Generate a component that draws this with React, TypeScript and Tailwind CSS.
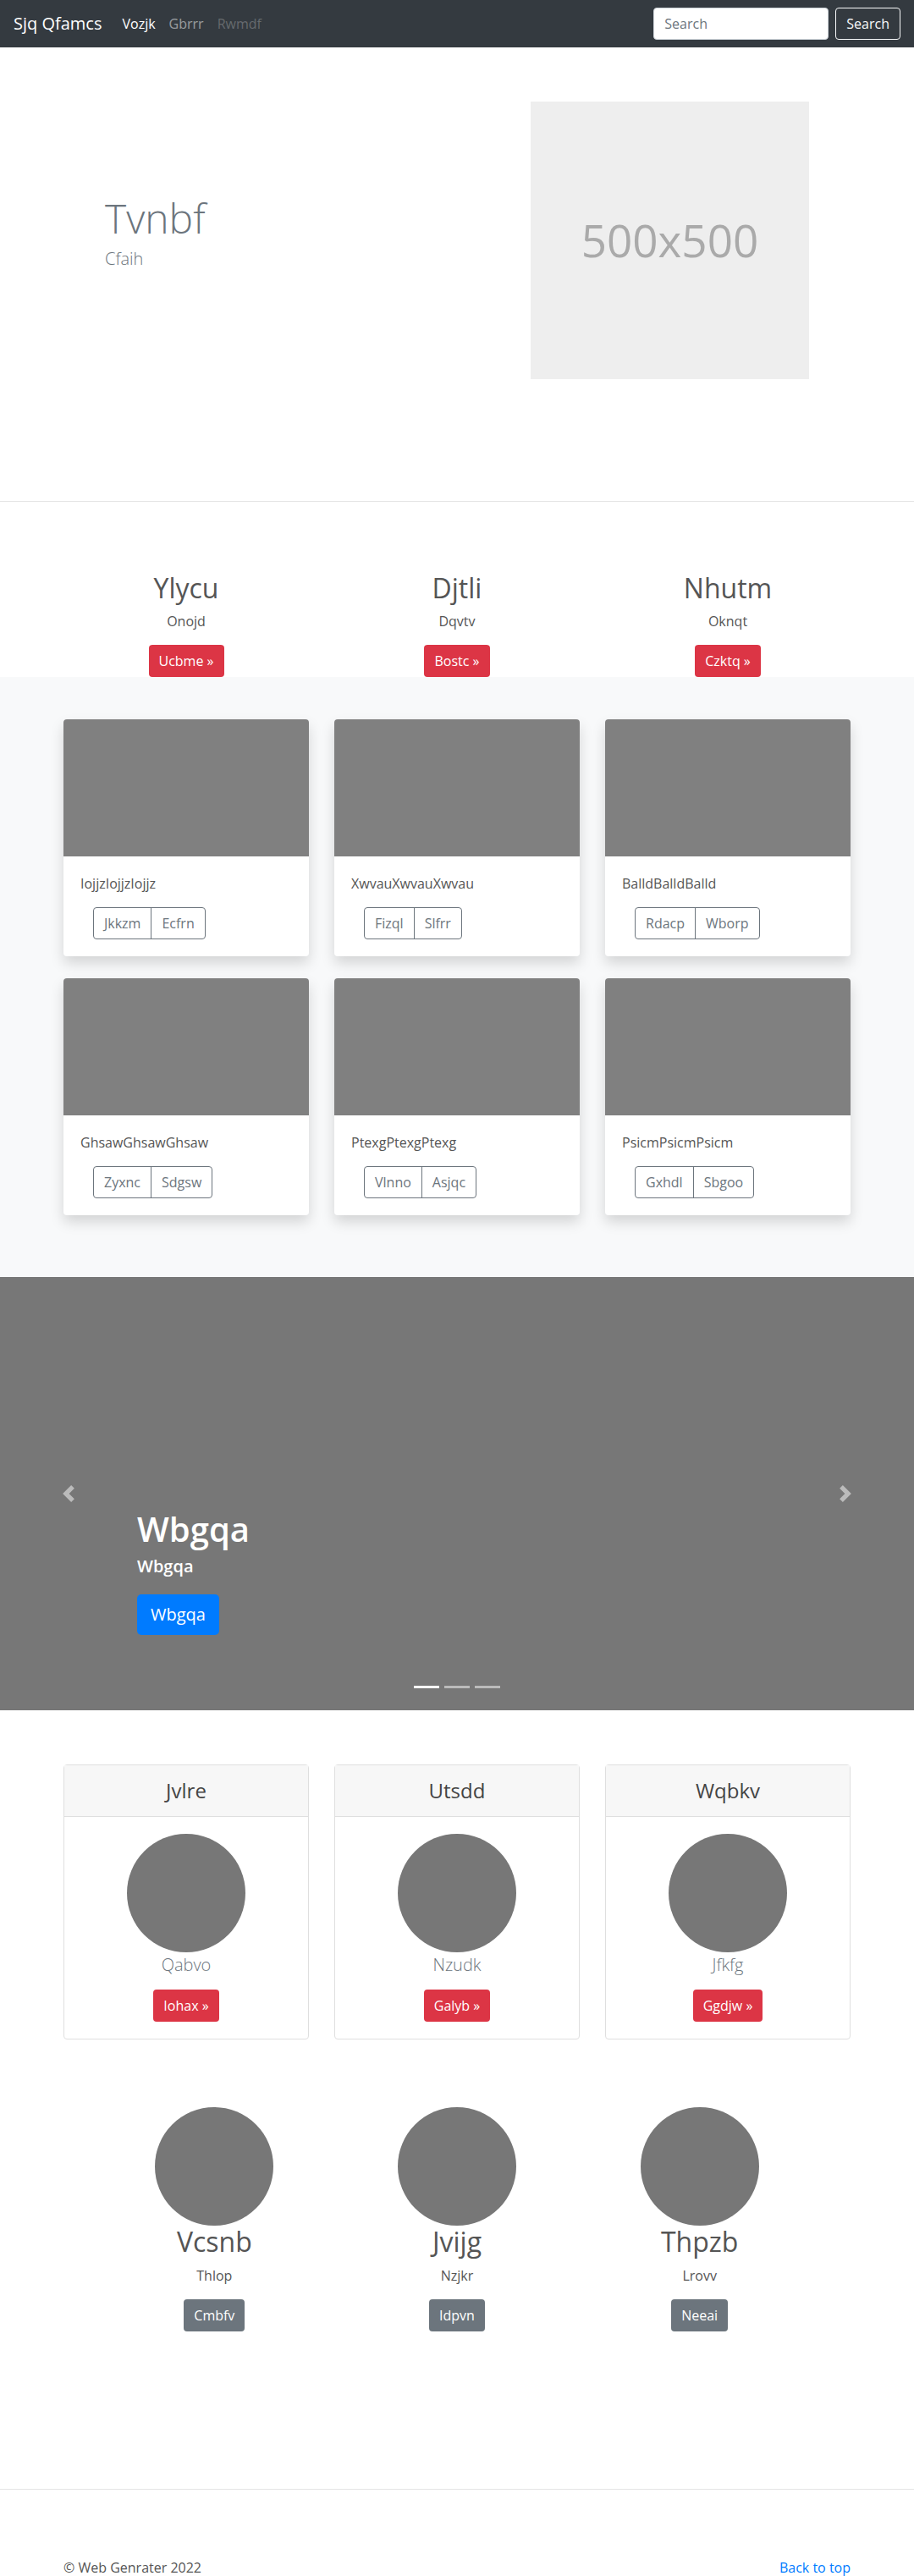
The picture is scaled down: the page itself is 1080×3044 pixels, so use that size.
import React from "react";

const FONT = { fontFamily: '"Segoe UI", "Open Sans", "Noto Sans", sans-serif' };

const FEATURES = [
  { t: "Ylycu", s: "Onojd", b: "Ucbme »" },
  { t: "Djtli", s: "Dqvtv", b: "Bostc »" },
  { t: "Nhutm", s: "Oknqt", b: "Czktq »" },
];

const ALBUM = [
  { t: "IojjzIojjzIojjz", a: "Jkkzm", b: "Ecfrn" },
  { t: "XwvauXwvauXwvau", a: "Fizql", b: "Slfrr" },
  { t: "BalldBalldBalld", a: "Rdacp", b: "Wborp" },
  { t: "GhsawGhsawGhsaw", a: "Zyxnc", b: "Sdgsw" },
  { t: "PtexgPtexgPtexg", a: "Vlnno", b: "Asjqc" },
  { t: "PsicmPsicmPsicm", a: "Gxhdl", b: "Sbgoo" },
];

const PROFILES = [
  { h: "Jvlre", n: "Qabvo", b: "Iohax »" },
  { h: "Utsdd", n: "Nzudk", b: "Galyb »" },
  { h: "Wqbkv", n: "Jfkfg", b: "Ggdjw »" },
];

const TEAM = [
  { n: "Vcsnb", s: "Thlop", b: "Cmbfv" },
  { n: "Jvijg", s: "Nzjkr", b: "Idpvn" },
  { n: "Thpzb", s: "Lrovv", b: "Neeai" },
];

function Chevron({ dir }: { dir: "prev" | "next" }) {
  return (
    <svg width="20" height="20" viewBox="0 0 8 8" className="opacity-50" fill="#fff">
      {dir === "prev" ? (
        <path d="M5.25 0l-4 4 4 4 1.5-1.5L4.25 4l2.5-2.5L5.25 0z" />
      ) : (
        <path d="M2.75 0l-1.5 1.5L3.75 4l-2.5 2.5L2.75 8l4-4-4-4z" />
      )}
    </svg>
  );
}

export default function App() {
  return (
    <div style={FONT} className="w-[1080px] bg-white text-[16px] leading-[1.5] text-[#555]">
      {/* Navbar */}
      <nav className="flex h-14 items-center bg-[#343a40] px-4">
        <span className="mr-4 text-[20px] leading-[30px] text-white">Sjq Qfamcs</span>
        <span className="px-2 text-white">Vozjk</span>
        <span className="px-2 text-white/50">Gbrrr</span>
        <span className="px-2 text-white/25">Rwmdf</span>
        <div className="ml-auto flex items-center">
          <input
            placeholder="Search"
            className="mr-2 h-[38px] w-[207px] rounded border border-[#ced4da] bg-white px-3 text-[16px] text-[#495057] outline-none placeholder:text-[#6c757d]"
          />
          <button className="h-[38px] rounded border border-[#f8f9fa] px-3 text-[#f8f9fa]">Search</button>
        </div>
      </nav>

      {/* Hero */}
      <section className="border-b border-[#e5e5e5]">
        <div className="mx-auto flex w-[960px] pt-16 pb-[144px]">
          <div className="w-[567px] pl-16 pt-[109px]">
            <h1 className="mb-1 text-[48px] font-light leading-[1.2] text-[#6c757d]">Tvnbf</h1>
            <p className="text-[20px] font-light text-[#6c757d]">Cfaih</p>
          </div>
          <div className="flex h-[328px] w-[329px] items-center justify-center bg-[#eeeeee] text-[53px] text-[#aaaaaa]">
            500x500
          </div>
        </div>
      </section>

      {/* Features */}
      <section className="pt-[83px]">
        <div className="mx-auto grid w-[960px] grid-cols-3">
          {FEATURES.map((f) => (
            <div key={f.t} className="flex flex-col items-center">
              <h2 className="mb-2 text-[32px] font-medium leading-[1.2] text-[#555]">{f.t}</h2>
              <p className="mb-4 text-[#555]">{f.s}</p>
              <button className="h-[38px] rounded bg-[#dc3545] px-3 text-white">{f.b}</button>
            </div>
          ))}
        </div>
      </section>

      {/* Album */}
      <section className="bg-[#f8f9fa] pt-[50px] pb-[73px]">
        <div className="mx-auto grid w-[930px] grid-cols-3 gap-x-[30px] gap-y-[26px]">
          {ALBUM.map((c) => (
            <div key={c.t} className="overflow-hidden rounded bg-white shadow-[0_8px_16px_rgba(0,0,0,0.15)]">
              <div className="h-[162px] bg-[#808080]" />
              <div className="p-5">
                <p className="mb-4 text-[#555]">{c.t}</p>
                <div className="ml-[15px] flex w-fit rounded border border-[#6c757d] text-[#6c757d]">
                  <span className="flex h-[36px] items-center border-r border-[#6c757d] px-3">{c.a}</span>
                  <span className="flex h-[36px] items-center px-3">{c.b}</span>
                </div>
              </div>
            </div>
          ))}
        </div>
      </section>

      {/* Carousel */}
      <section className="relative flex h-[512px] items-center justify-between bg-[#777777]">
        <div className="flex w-[162px] justify-center">
          <Chevron dir="prev" />
        </div>
        <div className="flex w-[162px] justify-center">
          <Chevron dir="next" />
        </div>
        <div className="absolute left-[162px] top-[274px] text-white">
          <h1 className="mb-2 text-[40px] font-semibold leading-[1.2]">Wbgqa</h1>
          <p className="mb-[21px] text-[20px] font-semibold leading-[1.2]">Wbgqa</p>
          <button className="h-12 rounded-[5px] bg-[#007bff] px-4 text-[20px] text-white">Wbgqa</button>
        </div>
        <div className="absolute bottom-[26px] left-0 right-0 flex justify-center gap-1.5">
          <span className="h-[3px] w-[30px] bg-white" />
          <span className="h-[3px] w-[30px] bg-white/50" />
          <span className="h-[3px] w-[30px] bg-white/50" />
        </div>
      </section>

      {/* Profile cards */}
      <section className="pt-16">
        <div className="mx-auto grid w-[930px] grid-cols-3 gap-x-[30px]">
          {PROFILES.map((p) => (
            <div key={p.h} className="rounded border border-[#dfdfdf] text-center">
              <div className="flex h-[61px] items-center justify-center border-b border-[#dfdfdf] bg-[#f7f7f7]">
                <h4 className="text-[24px] leading-[1.2] text-[#444]">{p.h}</h4>
              </div>
              <div className="flex flex-col items-center p-5">
                <div className="h-[140px] w-[140px] rounded-full bg-[#777777]" />
                <p className="mb-[14px] text-[20px] font-light text-[#6c757d]">{p.n}</p>
                <button className="h-[38px] rounded bg-[#dc3545] px-3 text-white">{p.b}</button>
              </div>
            </div>
          ))}
        </div>
      </section>

      {/* Team */}
      <section className="pt-[80px] pb-[186px]">
        <div className="mx-auto grid w-[860px] grid-cols-3">
          {TEAM.map((m) => (
            <div key={m.n} className="flex flex-col items-center text-center">
              <div className="h-[140px] w-[140px] rounded-full bg-[#777777]" />
              <h2 className="mb-2 text-[32px] leading-[1.2] text-[#555]">{m.n}</h2>
              <p className="mb-4 text-[#555]">{m.s}</p>
              <button className="h-[38px] rounded bg-[#6c757d] px-3 text-white">{m.b}</button>
            </div>
          ))}
        </div>
      </section>

      {/* Footer */}
      <footer className="border-t border-[#e5e5e5] pt-20">
        <div className="mx-auto flex w-[930px] justify-between">
          <p className="text-[#555]">© Web Genrater 2022</p>
          <a className="text-[#007bff]">Back to top</a>
        </div>
      </footer>
    </div>
  );
}
